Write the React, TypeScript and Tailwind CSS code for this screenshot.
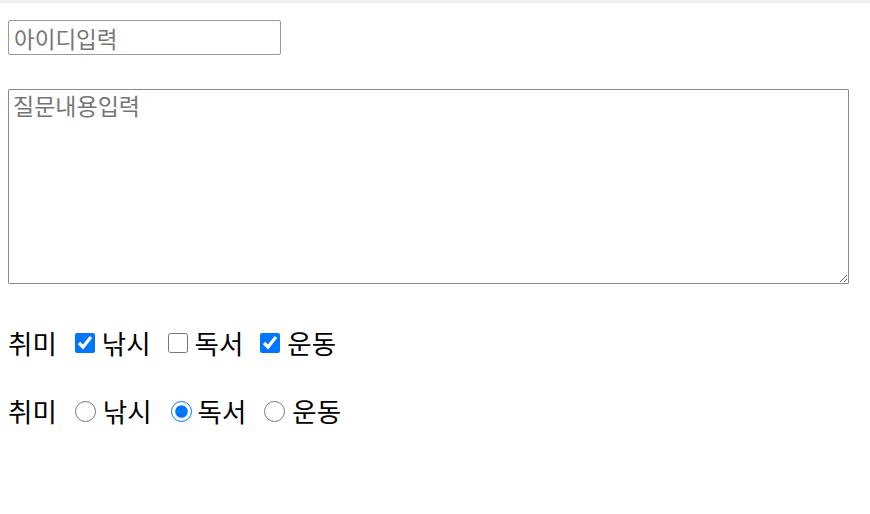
import React from 'react';

const ko = { fontFamily: '"Noto Sans CJK KR", "Noto Sans", sans-serif' };

export default function App() {
  return (
    <div className="min-h-screen bg-white text-black" style={ko}>
      <div className="h-[3px] bg-[#efefef]" />
      <div className="px-2 pt-[17px]">
        {/* 아이디 */}
        <input
          type="text"
          placeholder="아이디입력"
          className="block w-[273px] h-[35px] border border-[#9a9a9a] rounded-[2px] px-[5px] text-[22.5px] leading-none placeholder:text-[#767676] outline-none"
          style={ko}
        />

        {/* 질문내용 */}
        <textarea
          placeholder="질문내용입력"
          className="mt-[34px] block w-[841px] h-[195px] border border-[#8a8a8a] rounded-[1px] px-[4px] pt-0 text-[23px] leading-[30px] placeholder:text-[#767676] outline-none"
          style={ko}
        />

        {/* 체크박스 */}
        <div className="mt-[43px] flex items-center h-[32px] text-[26.5px] leading-none">
          <span>취미</span>
          <input type="checkbox" defaultChecked className="ml-[18px] w-[20px] h-[20px] accent-[#0075ff]" />
          <span className="ml-[7px]">낚시</span>
          <input type="checkbox" className="ml-[17px] w-[20px] h-[20px] accent-[#0075ff]" />
          <span className="ml-[7px]">독서</span>
          <input type="checkbox" defaultChecked className="ml-[17px] w-[20px] h-[20px] accent-[#0075ff]" />
          <span className="ml-[7px]">운동</span>
        </div>

        {/* 라디오 */}
        <div className="mt-[36px] flex items-center h-[32px] text-[26.5px] leading-none">
          <span>취미</span>
          <input type="radio" name="hobby" className="ml-[18px] w-[21px] h-[21px] accent-[#0075ff]" />
          <span className="ml-[7px]">낚시</span>
          <input type="radio" name="hobby" defaultChecked className="ml-[19px] w-[21px] h-[21px] accent-[#0075ff]" />
          <span className="ml-[6px]">독서</span>
          <input type="radio" name="hobby" className="ml-[18px] w-[21px] h-[21px] accent-[#0075ff]" />
          <span className="ml-[7px]">운동</span>
        </div>
      </div>
    </div>
  );
}
